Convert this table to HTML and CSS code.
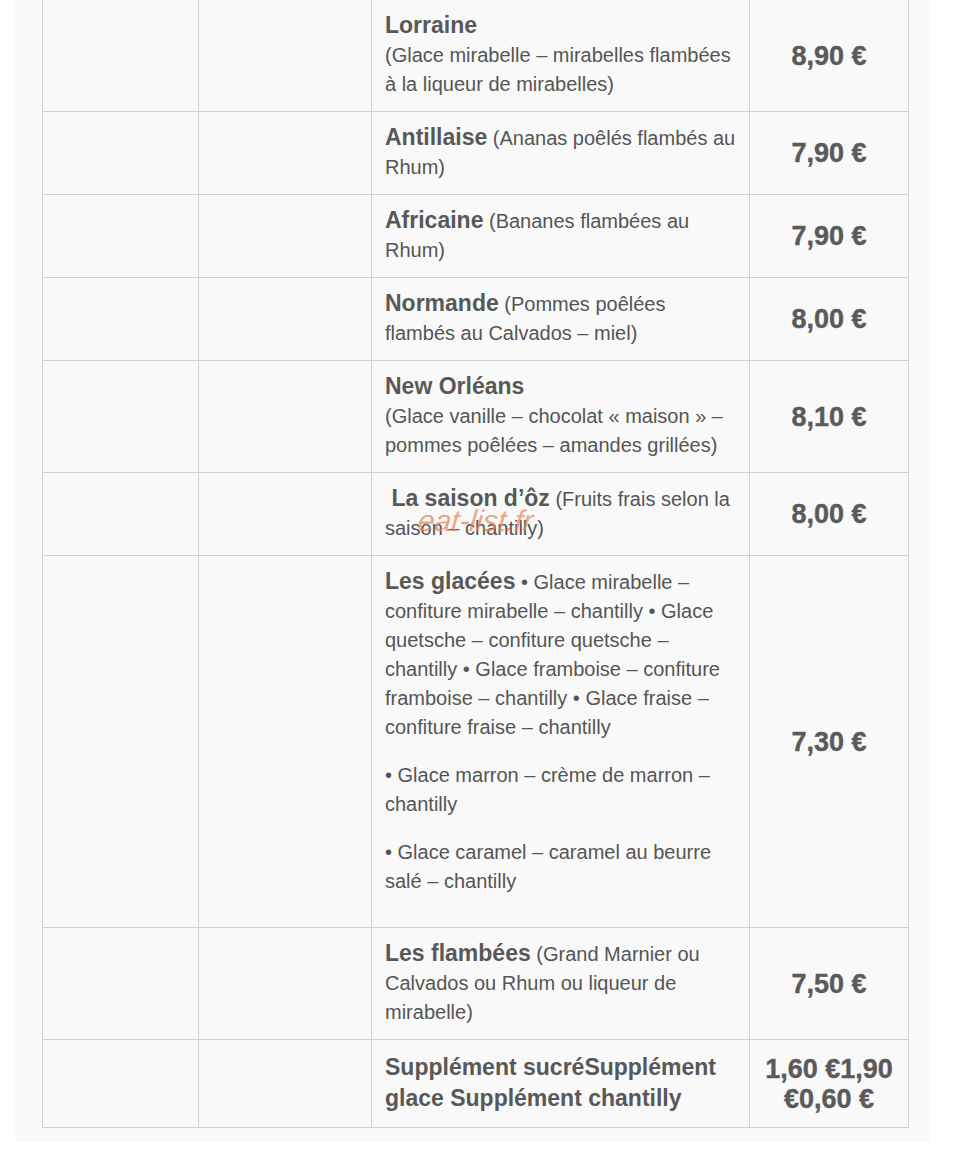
FILE: index.html
```html
<!DOCTYPE html>
<html lang="fr">
<head>
    <meta charset="UTF-8">
    <meta name="viewport" content="width=device-width, initial-scale=1.0">
    <title>Carte des desserts</title>
    <link rel="stylesheet" href="styles.css">
</head>
<body>
    <div class="page">
        <table class="menu">
            <tr>
                <td class="blank first"></td>
                <td class="blank second"></td>
                <td class="item"><strong>Lorraine</strong><br>(Glace mirabelle – mirabelles flambées à la liqueur de mirabelles)</td>
                <td class="price">8,90 €</td>
            </tr>
            <tr>
                <td class="blank"></td>
                <td class="blank"></td>
                <td class="item"><strong>Antillaise</strong> (Ananas poêlés flambés au Rhum)</td>
                <td class="price">7,90 €</td>
            </tr>
            <tr>
                <td class="blank"></td>
                <td class="blank"></td>
                <td class="item"><strong>Africaine</strong> (Bananes flambées au Rhum)</td>
                <td class="price">7,90 €</td>
            </tr>
            <tr>
                <td class="blank"></td>
                <td class="blank"></td>
                <td class="item"><strong>Normande</strong> (Pommes poêlées flambés au Calvados – miel)</td>
                <td class="price">8,00 €</td>
            </tr>
            <tr>
                <td class="blank"></td>
                <td class="blank"></td>
                <td class="item"><strong>New Orléans</strong><br>(Glace vanille – chocolat « maison » – pommes poêlées – amandes grillées)</td>
                <td class="price">8,10 €</td>
            </tr>
            <tr>
                <td class="blank"></td>
                <td class="blank"></td>
                <td class="item watermarked"><strong>&nbsp;La saison d’ôz</strong> (Fruits frais selon la saison – chantilly)<span class="watermark">eat-list.fr</span></td>
                <td class="price">8,00 €</td>
            </tr>
            <tr>
                <td class="blank"></td>
                <td class="blank"></td>
                <td class="item">
                    <p><strong>Les glacées</strong> • Glace mirabelle – confiture mirabelle – chantilly • Glace quetsche – confiture quetsche – chantilly • Glace framboise – confiture framboise – chantilly • Glace fraise – confiture fraise – chantilly</p>
                    <p>• Glace marron – crème de marron – chantilly</p>
                    <p>• Glace caramel – caramel au beurre salé – chantilly</p>
                </td>
                <td class="price">7,30 €</td>
            </tr>
            <tr>
                <td class="blank"></td>
                <td class="blank"></td>
                <td class="item"><strong>Les flambées</strong> (Grand Marnier ou Calvados ou Rhum ou liqueur de mirabelle)</td>
                <td class="price">7,50 €</td>
            </tr>
            <tr class="extras">
                <td class="blank"></td>
                <td class="blank"></td>
                <td class="item"><strong>Supplément sucréSupplément glace Supplément chantilly</strong></td>
                <td class="price">1,60 €1,90 €0,60 €</td>
            </tr>
        </table>
    </div>
</body>
</html>
```

FILE: styles.css
```css
body {
    margin: 0;
    background-color: #fff;
    font-family: 'Liberation Sans', Arial, sans-serif;
    color: #555;
}

.page {
    margin: 0 26px 0 15px;
    padding: 0 0 14px 27px;
    background-color: #fafafa;
}

.menu {
    width: 867px;
    margin-top: -1px;
    border-collapse: collapse;
    background-color: #f9f9f9;
}

.menu td {
    border: 1px solid #d2d2d2;
    padding: 12px 13px 12px;
    font-size: 20px;
    line-height: 29px;
    vertical-align: top;
}

.menu td.first {
    width: 129px;
}

.menu td.second {
    width: 146px;
}

.menu td.item {
    width: 351px;
}

.menu strong {
    font-size: 23px;
    line-height: 20px;
    color: #585858;
}

.menu p {
    margin: 0 0 19px;
}

.menu td.price {
    padding: 0 6px;
    text-align: center;
    vertical-align: middle;
    font-size: 27px;
    font-weight: bold;
    line-height: 30px;
    color: #5a5a5a;
    -webkit-text-stroke: 0.4px #5a5a5a;
}

.extras td {
    padding-top: 12px;
    padding-bottom: 13px;
    line-height: 30px;
}

.extras strong {
    line-height: 30px;
}

.watermarked {
    position: relative;
}

.watermark {
    position: absolute;
    left: 46px;
    top: 33px;
    font-size: 30px;
    font-style: italic;
    line-height: 30px;
    color: rgba(228, 130, 80, 0.7);
    transform: skewX(-6deg);
}
```
